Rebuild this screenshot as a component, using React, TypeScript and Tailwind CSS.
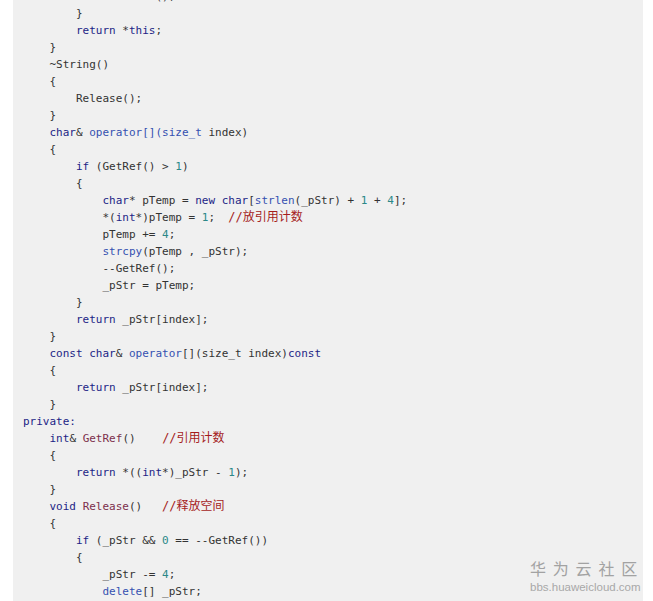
import React from "react";

type Seg = [string, string?];
type Line = { lvl: number; segs: Seg[] };

const K = "text-[#1c1f86]";
const B = "text-[#3551b0]";
const T = "text-[#7c2f4c]";
const N = "text-[#2a8888]";
const C = "text-[#a51c1c]";

const L = (lvl: number, ...segs: (Seg | string)[]): Line => ({
  lvl,
  segs: segs.map((s) => (typeof s === "string" ? [s] : s)) as Seg[],
});

const lines: Line[] = [
  L(3, "++GetRef();"),
  L(2, "}"),
  L(2, ["return", K], " *", ["this", K], ";"),
  L(1, "}"),
  L(1, "~String()"),
  L(1, "{"),
  L(2, "Release();"),
  L(1, "}"),
  L(1, ["char", K], "& ", ["operator[](size_t", B], " index)"),
  L(1, "{"),
  L(2, ["if", K], " (GetRef() > ", ["1", N], ")"),
  L(2, "{"),
  L(3, ["char", K], "* pTemp = ", ["new", K], " ", ["char", K], "[", ["strlen", B], "(_pStr) + ", ["1", N], " + ", ["4", N], "];"),
  L(3, "*(", ["int", K], "*)pTemp = ", ["1", N], ";  ", ["//放引用计数", C]),
  L(3, "pTemp += ", ["4", N], ";"),
  L(3, ["strcpy", B], "(pTemp , _pStr);"),
  L(3, "--GetRef();"),
  L(3, "_pStr = pTemp;"),
  L(2, "}"),
  L(2, ["return", K], " _pStr[index];"),
  L(1, "}"),
  L(1, ["const", K], " ", ["char", K], "& ", ["operator", B], "[](size_t index)", ["const", K]),
  L(1, "{"),
  L(2, ["return", K], " _pStr[index];"),
  L(1, "}"),
  L(0, ["private:", K]),
  L(1, ["int", K], "& ", ["GetRef", T], "()    ", ["//引用计数", C]),
  L(1, "{"),
  L(2, ["return", K], " *((", ["int", K], "*)_pStr - ", ["1", N], ");"),
  L(1, "}"),
  L(1, ["void", K], " ", ["Release", T], "()   ", ["//释放空间", C]),
  L(1, "{"),
  L(2, ["if", K], " (_pStr && ", ["0", N], " == --GetRef())"),
  L(2, "{"),
  L(3, "_pStr -= ", ["4", N], ";"),
  L(3, ["delete", B], "[] _pStr;"),
];

export default function App() {
  return (
    <div className="relative w-[653px] h-[601px] overflow-hidden bg-white">
      <div className="ml-[13px] w-[630px] h-full bg-[#f0f0f0] overflow-hidden">
        <pre
          className="-mt-[12px] pl-[10px] text-[11px] leading-[17px] text-[#333333]"
          style={{ fontFamily: '"DejaVu Sans Mono", "Noto Sans CJK SC", monospace' }}
        >
          {lines.map((ln, i) => (
            <div key={i} className="h-[17px] whitespace-pre">
              {"    ".repeat(ln.lvl)}
              {ln.segs.map((s, j) =>
                s[1] ? (
                  <span
                    key={j}
                    className={s[1] + (s[0].startsWith("//") ? " text-[12px]" : "")}
                    style={s[0].startsWith("//") ? { fontFamily: '"DejaVu Sans Mono", "Noto Sans CJK SC", sans-serif' } : undefined}
                  >
                    {s[0]}
                  </span>
                ) : (
                  <span key={j}>{s[0]}</span>
                )
              )}
            </div>
          ))}
        </pre>
      </div>
      <div className="absolute left-[530px] top-[558px] flex flex-col items-start">
        <div
          className="text-[16px] leading-[20px] tracking-[6.8px] text-[#a2a2a2]"
          style={{ fontFamily: '"Noto Sans CJK SC", sans-serif' }}
        >
          华为云社区
        </div>
        <div
          className="text-[11.5px] leading-[14px] text-[#a8a8a8] mt-[2px]"
          style={{ fontFamily: '"Liberation Sans", Arial, sans-serif' }}
        >
          bbs.huaweicloud.com
        </div>
      </div>
    </div>
  );
}
